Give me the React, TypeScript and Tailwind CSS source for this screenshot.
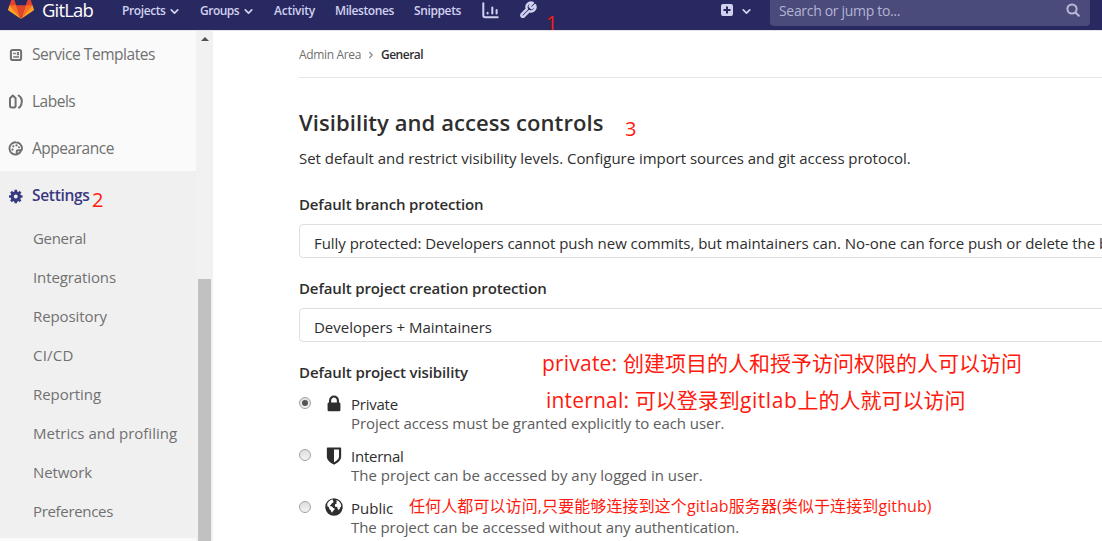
import type { ReactNode } from "react";
import { ChevronDown, ChevronRight } from "lucide-react";

function Tanuki() {
  return (
    <svg width="26" height="24" viewBox="0 0 36 36" preserveAspectRatio="none" className="shrink-0">
      <path fill="#e24329" d="M2 14l9.38 9v-9l-4-12.28c-.205-.632-1.176-.632-1.38 0z" />
      <path fill="#e24329" d="M34 14l-9.38 9v-9l4-12.28c.205-.632 1.176-.632 1.38 0z" />
      <path fill="#e24329" d="M18 34.38L11.38 14h13.24z" />
      <path fill="#fc6d26" d="M18 34.38L11.38 14H2l6 9zM18 34.38L24.62 14H34l-6 9z" />
      <path fill="#fca326" d="M2 14L.1 20.16c-.18.565 0 1.2.5 1.56L18 34.38zM34 14l1.9 6.16c.18.565 0 1.2-.5 1.56L18 34.38z" />
    </svg>
  );
}

function LockIcon() {
  return (
    <svg width="20" height="20" viewBox="0 0 1792 1792" fill="#2e2e2e">
      <path d="M640 768h512v-192q0-106-75-181t-181-75-181 75-75 181v192zm832 96v576q0 40-28 68t-68 28h-960q-40 0-68-28t-28-68v-576q0-40 28-68t68-28h32v-192q0-184 132-316t316-132 316 132 132 316v192h32q40 0 68 28t28 68z" />
    </svg>
  );
}

function ShieldIcon() {
  return (
    <svg width="20" height="20" viewBox="0 0 1792 1792" fill="#2e2e2e">
      <path d="M1344 960v-640h-448v1137q119-63 213-137 235-184 235-360zm192-768v768q0 86-33.500 170.500t-83 150-118 127.500-126.500 103-121 77.500-89.500 49.500-42.500 20q-12 6-26 6t-26-6q-16-7-42.500-20t-89.500-49.500-121-77.500-126.500-103-118-127.500-83-150-33.500-170.500v-768q0-26 19-45t45-19h1152q26 0 45 19t19 45z" />
    </svg>
  );
}

function GlobeIcon() {
  return (
    <svg width="18" height="18" viewBox="0 0 18 18">
      <circle cx="9" cy="9" r="8.700" fill="#2e2e2e" />
      <path fill="#fff" d="M2.300 5.600L4 3.200l2.200-1.500 1.700-.2.300.9-.8.5 1.300.6-.4 1-1.600.9-.9 1.500-1 .5.600.9 1.700.3 1.100 1.300 1.500.6-.4 1.400-1.300 1-.6 1.400-.9.200-.7-2.200-1.500-1.400-.3-1.600-1.700-1z" />
      <path fill="#fff" d="M11.200 2.100l2.400.9 1.700 2 .9 2.300-.3 1.800-.9.500-.3 1.500-1.200 1-.9-1.700-.5-1.600-1.500.1-.9-1.400.7-1.600 1.500-.5-.7-.9.600-.9z" />
    </svg>
  );
}

function TemplateIcon() {
  return (
    <svg width="15" height="14" viewBox="0 0 15 14" fill="none" stroke="#707070">
      <rect x="2.900" y="1.900" width="10.200" height="10.200" rx="1.800" strokeWidth="2" />
      <path d="M5.200 5.500h2.600M8.800 4.700h2.200M8.800 6.500h2.200M5.200 9h5.800" strokeWidth="1.400" />
    </svg>
  );
}

function LabelsIcon() {
  return (
    <svg width="15" height="15" viewBox="0 0 15 15" fill="none" stroke="#707070" strokeWidth="2" strokeLinejoin="round" strokeLinecap="round">
      <path d="M2 4.200L4.800 1.500l2.800 2.700v7.600q0 1.700-1.500 1.700H3.500q-1.500 0-1.500-1.700z" />
      <path d="M10.600 1.500q3.300 2 3.300 5.500 0 3.500-2.200 6.500H10.900" />
    </svg>
  );
}

function PaletteIcon() {
  return (
    <svg width="15" height="15" viewBox="0 0 15 15" fill="none" stroke="#707070" strokeWidth="1.900" strokeLinejoin="round">
      <path d="M7.900 1.200a6.200 6.200 0 1 0 .8 12.300V10.400q0-1.200 1.200-1.200h3.700q.4-.8.400-1.700a6.200 6.200 0 0 0-6.100-6.300zM9 13.400q3-.8 4.300-4" />
      <g fill="#707070" stroke="none">
        <circle cx="4.500" cy="8.700" r="1.100" />
        <circle cx="5.300" cy="5.300" r="1.100" />
        <circle cx="8.500" cy="4.400" r="1.100" />
        <circle cx="11" cy="6.300" r="1" />
      </g>
    </svg>
  );
}

function GearIcon() {
  return (
    <svg width="15" height="15" viewBox="0 0 16 16" fill="none" stroke="#393982">
      <circle cx="8.300" cy="8" r="3.800" strokeWidth="3.400" />
      <path strokeWidth="2.800" d="M8.300.8v3M8.300 12.200v3M1.100 8h3M12.500 8h3M3.200 2.900l2 2M11.400 11.100l2 2M13.400 2.900l-2 2M5.200 11.100l-2 2" />
    </svg>
  );
}

function ChartIcon() {
  return (
    <svg width="17" height="17" viewBox="0 0 17 17" fill="none" stroke="#d1d1f0" strokeWidth="2" strokeLinecap="round">
      <path d="M1.300 1.300v12.200q0 1.800 1.800 1.800h12.600" />
      <path d="M5.600 10.800v.7M10.300 5.500v6M14.600 8v3.500" />
    </svg>
  );
}

function WrenchIcon() {
  return (
    <svg width="18" height="18" viewBox="0 0 24 24" fill="none" stroke="#d1d1f0" strokeWidth="3.200" strokeLinecap="round" strokeLinejoin="round">
      <path d="M14.700 6.300a1 1 0 0 0 0 1.400l1.600 1.600a1 1 0 0 0 1.400 0l3.770-3.770a6 6 0 0 1-7.940 7.940l-6.910 6.910a2.120 2.120 0 0 1-3-3l6.910-6.910a6 6 0 0 1 7.940-7.940l-3.760 3.760z" />
    </svg>
  );
}

function Header() {
  return (
    <header className="flex h-[31px] shrink-0 items-start overflow-hidden border-b border-[#e5e5e5] bg-[#292961] text-[12px] font-semibold text-[#d1d1f0]">
      <div className="flex h-[20px] w-[122px] items-center pl-[8px] text-[18.5px] leading-[20px] font-normal tracking-[-0.85px] text-white">
        <div className="-mt-[5px] mr-[8px]"><Tanuki /></div>
        <span>GitLab</span>
      </div>
      <nav className="flex h-[22px] flex-1 items-center">
        <span className="w-[46px] tracking-[-0.4px]">Projects</span>
        <ChevronDown size={13} strokeWidth={3.200} className="mr-[19px]" />
        <span className="w-[42px] tracking-[-0.5px]">Groups</span>
        <ChevronDown size={13} strokeWidth={3.200} className="mr-[19px]" />
        <span className="w-[61px] tracking-[-0.24px]">Activity</span>
        <span className="w-[79px] tracking-[-0.4px]">Milestones</span>
        <span className="w-[68px] tracking-[-0.38px]">Snippets</span>
        <span className="-mt-[2px] w-[37px]"><ChartIcon /></span>
        <span className="-mt-[2px]"><WrenchIcon /></span>
        <svg width="12" height="12" viewBox="0 0 12 12" className="-mt-[2px] mr-[7px] ml-auto">
          <rect width="12" height="12" rx="2" fill="#d1d1f0" />
          <path d="M6 2.500v7M2.500 6h7" stroke="#292961" strokeWidth="2" />
        </svg>
        <ChevronDown size={13} strokeWidth={3.200} className="mr-[17px]" />
      </nav>
      <div className="mr-[12px] flex h-[26px] w-[320px] items-start justify-between rounded-b-[4px] bg-[#4a4a7b] pr-[10px] pl-[9px] text-[14px] font-normal text-[#b4b4d4]">
        <span className="leading-[22px] tracking-[-0.32px]">Search or jump to...</span>
        <svg width="14" height="14" viewBox="0 0 14 14" fill="none" stroke="#babad6" strokeWidth="2" className="mt-[3px]">
          <circle cx="6" cy="6" r="4.600" />
          <path d="M9.500 9.500l3.300 3.300" strokeLinecap="round" />
        </svg>
      </div>
    </header>
  );
}

function SideItem({ icon, children, className }: { icon: ReactNode; children: ReactNode; className: string }) {
  return (
    <div className={`flex items-center pl-[8px] text-[15.5px] ${className}`}>
      <span className="w-[24px]">{icon}</span>
      <span>{children}</span>
    </div>
  );
}

const subItems = [
  { label: "General", cls: "tracking-[-0.315px]" },
  { label: "Integrations", cls: "tracking-[-0.106px]" },
  { label: "Repository", cls: "tracking-[-0.083px]" },
  { label: "CI/CD", cls: "tracking-[0.2px]" },
  { label: "Reporting", cls: "tracking-[-0.054px]" },
  { label: "Metrics and profiling", cls: "tracking-[0px]" },
  { label: "Network", cls: "tracking-[-0.103px]" },
  { label: "Preferences", cls: "tracking-[-0.32px]" },
];

function Sidebar() {
  return (
    <aside className="flex w-[213px] shrink-0 overflow-hidden text-[#707070]">
      <div className="w-[196px] bg-[#fafafa]">
        <SideItem icon={<TemplateIcon />} className="h-[46px] pt-[2px] tracking-[-0.445px]">Service Templates</SideItem>
        <SideItem icon={<LabelsIcon />} className="h-[47px] pt-[2px] tracking-[-0.5px]">Labels</SideItem>
        <SideItem icon={<PaletteIcon />} className="h-[47px] pt-[2px] tracking-[-0.467px]">Appearance</SideItem>
        <div className="h-[367px] bg-[#f0f0f0]">
          <div className="relative">
            <SideItem icon={<GearIcon />} className="h-[48px] pt-[2px] font-semibold tracking-[-0.315px] text-[#393982]">Settings</SideItem>
            <span className="absolute top-[14px] left-[92px] text-[20px] leading-[30px] text-[#ff1a0d]">2</span>
          </div>
          {subItems.map((s) => (
            <div key={s.label} className={`flex h-[39px] items-center pl-[33px] text-[15px] ${s.cls}`}>{s.label}</div>
          ))}
        </div>
      </div>
      <div className="flex w-[17px] flex-col items-center bg-[#f1f1f1]">
        <div className="mt-[6px] h-0 w-0 border-x-4 border-b-4 border-x-transparent border-b-[#505050]" />
        <div className="mt-[238px] w-[13px] flex-1 bg-[#c1c1c1]" />
      </div>
    </aside>
  );
}

function Radio({ checked }: { checked?: boolean }) {
  return (
    <span className="mt-[1px] flex h-[12px] w-[12px] items-center justify-center rounded-full border border-[#a2a2a2] bg-linear-to-b from-[#dedede] to-[#f3f3f3]">
      {checked && <span className="h-[6px] w-[6px] rounded-full bg-[#555]" />}
    </span>
  );
}

function Option({ checked, icon, title, note, children }: { checked?: boolean; icon: ReactNode; title: ReactNode; note?: ReactNode; children: ReactNode }) {
  return (
    <div className="flex h-[52px] items-start text-[15px]">
      <span className="flex w-[25px]"><Radio checked={checked} /></span>
      <span className="-mt-[2px] flex w-[20px] justify-center">{icon}</span>
      <div className="-mt-[2px] pl-[7px] leading-[20px]">
        <div className="flex text-[#2e2e2e]">{title}{note}</div>
        <div className="-mt-[1px] whitespace-nowrap text-[#5c5c5c]">{children}</div>
      </div>
    </div>
  );
}

export default function App() {
  return (
    <div className="flex h-[541px] w-[1102px] flex-col overflow-hidden bg-white font-['Open_Sans','Noto_Sans_CJK_SC',sans-serif] text-[#2e2e2e]">
      <div className="relative">
        <Header />
        <span className="absolute top-[9px] left-[546px] text-[20px] leading-[28px] text-[#ff1a0d]">1</span>
      </div>
      <div className="flex min-h-0 flex-1">
        <Sidebar />
        <main className="flex min-w-0 flex-1 flex-col overflow-hidden pl-[86px]">
          <div className="flex h-[47px] shrink-0 items-center border-b border-[#e5e5e5] pt-[2px] text-[12px]">
            <span className="w-[67px] tracking-[-0.35px] text-[#707070]">Admin Area</span>
            <ChevronRight size={10} strokeWidth={3} className="mr-[5px] text-[#888]" />
            <span className="font-semibold tracking-[-0.5px]">General</span>
          </div>
          <div className="mt-[29px] flex h-[30px] shrink-0 items-center">
            <h1 className="w-[326px] text-[22px] font-semibold tracking-[0.07px]">Visibility and access controls</h1>
            <span className="mt-[14px] text-[20px] text-[#ff1a0d]">3</span>
          </div>
          <p className="mt-[11px] h-[20px] shrink-0 text-[15px] leading-[20px] tracking-[-0.035px] whitespace-nowrap">Set default and restrict visibility levels. Configure import sources and git access protocol.</p>
          <label className="mt-[26px] h-[20px] shrink-0 text-[15px] leading-[20px] font-semibold tracking-[-0.14px]">Default branch protection</label>
          <div className="mt-[10px] -mr-[20px] flex h-[34px] shrink-0 items-center rounded-[4px] border border-[#dfdfdf] pt-[4px] pl-[14px] text-[15px] tracking-[-0.05px] whitespace-nowrap">Fully protected: Developers cannot push new commits, but maintainers can. No-one can force push or delete the branch.</div>
          <label className="mt-[20px] h-[20px] shrink-0 text-[15px] leading-[20px] font-semibold tracking-[-0.13px]">Default project creation protection</label>
          <div className="mt-[10px] -mr-[20px] flex h-[34px] shrink-0 items-center rounded-[4px] border border-[#dfdfdf] pt-[4px] pl-[14px] text-[15px] tracking-[-0.02px]">Developers + Maintainers</div>
          <div className="relative mt-[20px] h-[20px] shrink-0 text-[15px] leading-[20px] font-semibold">
            <span className="tracking-[-0.112px]">Default project visibility</span>
            <div className="absolute top-[-15px] left-[243px] text-[21px] leading-[32px] font-medium whitespace-nowrap text-[#ff1a0d]">
              <span className="tracking-[0.2px]">private: </span><span className="font-normal">创建项目的人和授予访问权限的人可以访问</span>
            </div>
            <div className="absolute top-[22px] left-[247px] text-[21px] leading-[32px] font-medium whitespace-nowrap text-[#ff1a0d]">
              <span className="tracking-[0.2px]">internal: </span><span className="font-normal">可以登录到</span><span className="tracking-[0.6px]">gitlab</span><span className="font-normal">上的人就可以访问</span>
            </div>
          </div>
          <div className="mt-[14px] flex shrink-0 flex-col">
            <Option checked icon={<LockIcon />} title={<span className="tracking-[-0.23px]">Private</span>}>
              <span className="tracking-[-0.055px]">Project access must be granted explicitly to each user.</span>
            </Option>
            <Option icon={<ShieldIcon />} title={<span className="tracking-[-0.25px]">Internal</span>}>
              The project can be accessed by any logged in user.
            </Option>
            <Option
              icon={<GlobeIcon />}
              title={<span className="w-[58px]">Public</span>}
              note={<span className="-mt-[2px] text-[16px] tracking-[0.1px] whitespace-nowrap text-[#ff1a0d]">任何人都可以访问,只要能够连接到这个gitlab服务器(类似于连接到github)</span>}
            >
              <span className="tracking-[-0.069px]">The project can be accessed without any authentication.</span>
            </Option>
          </div>
        </main>
      </div>
    </div>
  );
}
